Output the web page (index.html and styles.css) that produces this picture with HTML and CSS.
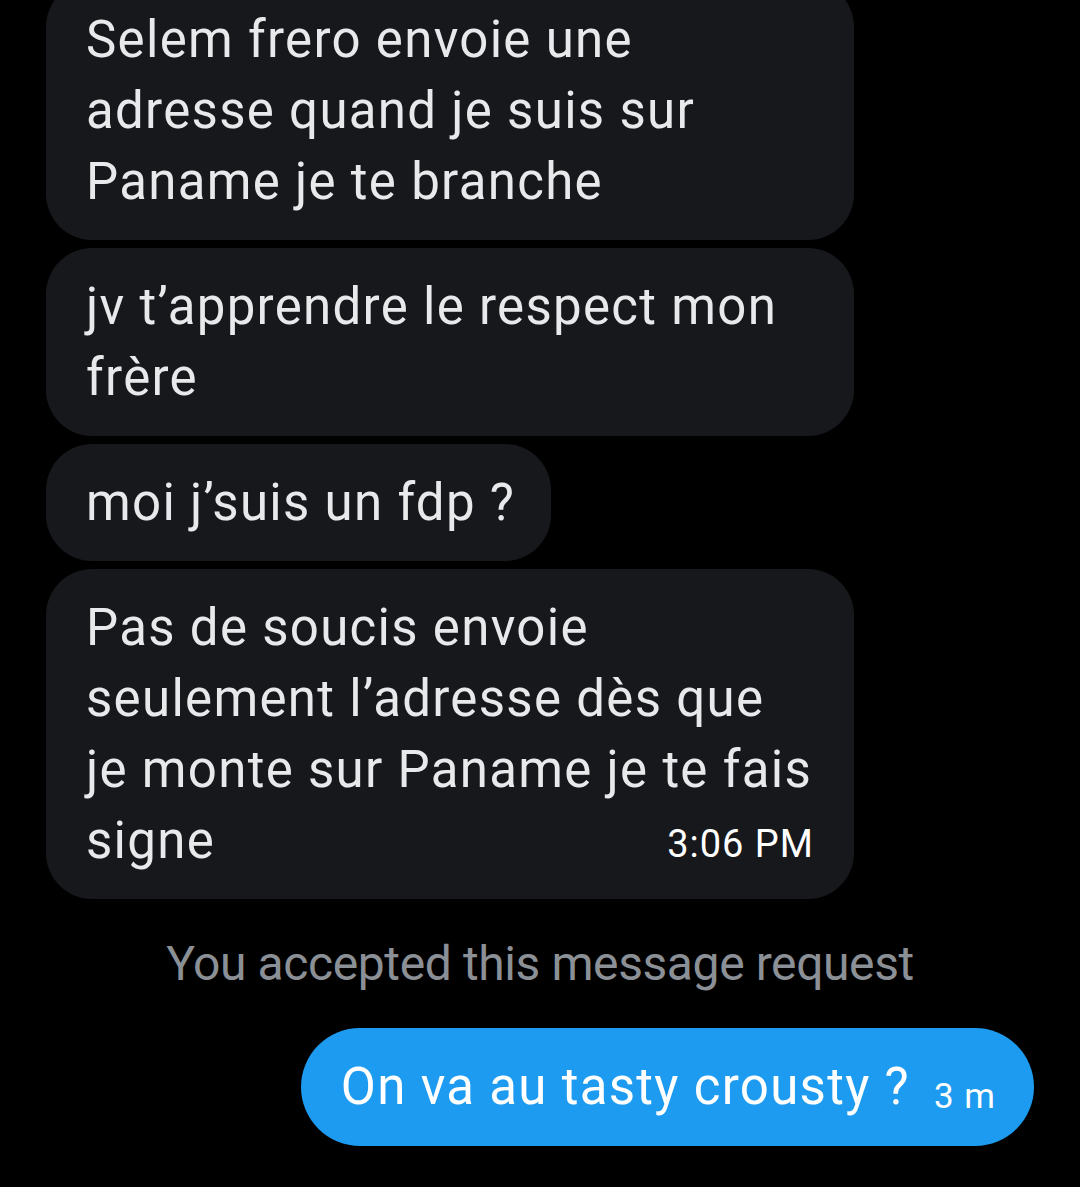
FILE: index.html
```html
<!DOCTYPE html>
<html lang="fr">
<head>
  <meta charset="UTF-8" />
  <meta name="viewport" content="width=device-width, initial-scale=1" />
  <title>Messages</title>
  <link rel="stylesheet" href="styles.css">
</head>
<body>
  <div class="chat">
    <div class="msg in first">Selem frero envoie une<br>adresse quand je suis sur<br>Paname je te branche</div>
    <div class="msg in">jv t’apprendre le respect mon<br>frère</div>
    <div class="msg in short">moi j’suis un fdp ?</div>
    <div class="msg in">Pas de soucis envoie<br>seulement l’adresse dès que<br>je monte sur Paname je te fais<br>signe<span class="time">3:06 PM</span></div>

    <p class="notice">You accepted this message request</p>

    <div class="msg out">On va au tasty crousty ?<span class="time small">3 m</span></div>
  </div>
</body>
</html>
```

FILE: styles.css
```css
html, body {
  margin: 0;
  padding: 0;
  background-color: #000;
}
body {
  font-family: Roboto, "Noto Sans", sans-serif;
  color: #e7e9ea;
  height: 1187px;
  overflow: hidden;
}
.chat {
  display: flex;
  flex-direction: column;
  align-items: flex-start;
  gap: 8px;
  padding: 0 46px;
}
.msg {
  box-sizing: border-box;
  max-width: 808px;
  padding: 23px 40px;
  font-size: 51px;
  letter-spacing: 1.3px;
  line-height: 71px;
  border-radius: 46px;
}
.msg.in {
  background-color: #16181c;
  width: 808px;
}
.msg.in.short {
  width: auto;
  padding-right: 36px;
}
.first {
  margin-top: -19px;
}
.time {
  float: right;
  height: 71px;
  font-size: 38px;
  letter-spacing: 1px;
  line-height: 79px;
  color: #fff;
}
.notice {
  align-self: center;
  margin: 24px 0 23px;
  font-size: 48px;
  letter-spacing: -0.4px;
  line-height: 66px;
  color: #8b9096;
}
.msg.out {
  align-self: flex-end;
  background-color: #1d9bf0;
  color: #fff;
  padding: 23px 38px 24px 40px;
  border-radius: 59px;
}
.time.small {
  float: none;
  height: auto;
  font-size: 35px;
  line-height: 1;
  margin-left: 24px;
  vertical-align: -4px;
}
```
